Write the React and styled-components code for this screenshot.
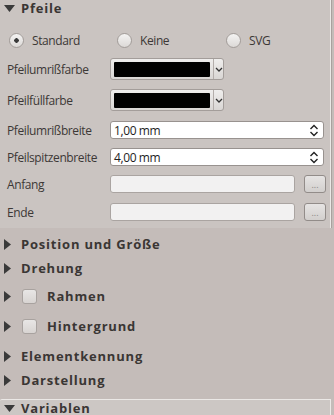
import React from "react";
import styled, { createGlobalStyle } from "styled-components";

const Global = createGlobalStyle`
  body {
    margin: 0;
    background: #c4bcb9;
    font-family: "Open Sans", "DejaVu Sans", sans-serif;
    font-size: 12px;
    letter-spacing: -0.4px;
    color: #3c3836;
  }
`;

function TriDown() {
  return (
    <TriSvg width="11" height="7" viewBox="0 0 11 7">
      <path d="M0 0 L11 0 L5.5 7 Z" fill="#3a3a3a" />
    </TriSvg>
  );
}

function TriRight() {
  return (
    <TriSvg width="7" height="11" viewBox="0 0 7 11">
      <path d="M0 0 L7 5.5 L0 11 Z" fill="#3a3a3a" />
    </TriSvg>
  );
}

function Chevron() {
  return (
    <svg width="8" height="5" viewBox="0 0 8 5">
      <path d="M1 1 L4 4 L7 1" stroke="#333" strokeWidth="1.3" fill="none" />
    </svg>
  );
}

function UpDown() {
  return (
    <svg width="10" height="13" viewBox="0 0 10 13">
      <path d="M1.5 5 L5 1.5 L8.5 5" stroke="#222" strokeWidth="1.4" fill="none" />
      <path d="M1.5 8 L5 11.5 L8.5 8" stroke="#222" strokeWidth="1.4" fill="none" />
    </svg>
  );
}

const fields = [
  { label: "Pfeilumrißfarbe", kind: "color", gap: 8, h: 22 },
  { label: "Pfeilfüllfarbe", kind: "color", gap: 9, h: 22 },
  { label: "Pfeilumrißbreite", kind: "spin", value: "1,00 mm", gap: 10, h: 18 },
  { label: "Pfeilspitzenbreite", kind: "spin", value: "4,00 mm", gap: 9, h: 18 },
  { label: "Anfang", kind: "file", gap: 9, h: 18 },
  { label: "Ende", kind: "file", gap: 10, h: 18 },
];

const sections = [
  { title: "Position und Größe", h: 24, gap: 4 },
  { title: "Drehung", h: 25 },
  { title: "Rahmen", h: 30, check: true },
  { title: "Hintergrund", h: 31, check: true },
  { title: "Elementkennung", h: 24, gap: 2 },
  { title: "Darstellung", h: 25 },
];

export default function App() {
  return (
    <>
      <Global />
      <Panel>
        <Group>
          <GroupHeader>
            <TriDown />
            <Title $left={6}>Pfeile</Title>
          </GroupHeader>
          <RadioRow>
            <RadioItem $w={108}>
              <Radio $on />
              Standard
            </RadioItem>
            <RadioItem $w={109}>
              <Radio />
              Keine
            </RadioItem>
            <RadioItem>
              <Radio />
              SVG
            </RadioItem>
          </RadioRow>
          {fields.map((f) => (
            <FieldRow key={f.label} $gap={f.gap} $h={f.h}>
              <Label>{f.label}</Label>
              {f.kind === "color" && (
                <ColorButton>
                  <Swatch />
                  <ArrowPart>
                    <Chevron />
                  </ArrowPart>
                </ColorButton>
              )}
              {f.kind === "spin" && (
                <SpinBox>
                  <span>{f.value}</span>
                  <UpDown />
                </SpinBox>
              )}
              {f.kind === "file" && (
                <FileWrap>
                  <FileInput />
                  <DotsButton>...</DotsButton>
                </FileWrap>
              )}
            </FieldRow>
          ))}
        </Group>
        {sections.map((s) => (
          <Section key={s.title} $h={s.h} $gap={s.gap || 0}>
            <TriRight />
            {s.check && <Check />}
            <Title $left={10}>{s.title}</Title>
          </Section>
        ))}
        <BottomHeader>
          <TriDown />
          <Title $left={6}>Variablen</Title>
        </BottomHeader>
      </Panel>
    </>
  );
}

const TriSvg = styled.svg`
  flex: none;
  display: block;
`;

const Panel = styled.div`
  width: 334px;
  height: 415px;
  overflow: hidden;
  display: flex;
  flex-direction: column;
  background: #c4bcb9;
`;

const Group = styled.div`
  width: 331px;
  height: 228px;
  flex: none;
  box-sizing: border-box;
  background: #cac4c1;
  border-right: 1px solid #ebe8e6;
  box-shadow: 1px 0 0 #a9a19e;
  display: flex;
  flex-direction: column;
`;

const GroupHeader = styled.div`
  height: 17px;
  display: flex;
  align-items: center;
  padding-left: 4px;
`;

const Title = styled.span`
  font-weight: bold;
  font-size: 13px;
  line-height: 15px;
  letter-spacing: 0.8px;
  color: #3a3634;
  white-space: nowrap;
  margin-left: ${(p) => p.$left}px;
`;

const RadioRow = styled.div`
  margin-top: 13px;
  height: 20px;
  display: flex;
  align-items: center;
  padding-left: 9px;
`;

const RadioItem = styled.label`
  width: ${(p) => (p.$w ? `${p.$w}px` : "auto")};
  display: flex;
  align-items: center;
  gap: 8px;
`;

const Radio = styled.span`
  width: 13px;
  height: 13px;
  flex: none;
  border-radius: 50%;
  border: 1px solid #a29c99;
  background: ${(p) =>
    p.$on
      ? "radial-gradient(circle at 50% 50%, #3a3a3a 0 2px, transparent 2.5px), linear-gradient(#f4f3f2, #dcd9d7)"
      : "linear-gradient(#f4f3f2, #dcd9d7)"};
`;

const FieldRow = styled.div`
  margin-top: ${(p) => p.$gap}px;
  height: ${(p) => p.$h}px;
  display: flex;
  align-items: center;
  padding-left: 7px;
`;

const Label = styled.span`
  width: 103px;
  flex: none;
  white-space: nowrap;
`;

const ColorButton = styled.div`
  width: 114px;
  height: 22px;
  box-sizing: border-box;
  border: 1px solid #a39d9a;
  border-radius: 3px;
  background: linear-gradient(#efeeed, #d9d6d4);
  display: flex;
  align-items: center;
  padding-left: 3px;
`;

const Swatch = styled.div`
  width: 96px;
  height: 15px;
  background: #000;
  border-radius: 1px;
`;

const ArrowPart = styled.div`
  margin-left: 3px;
  height: 100%;
  flex: 1;
  border-left: 1px solid #b3adaa;
  display: flex;
  align-items: center;
  justify-content: center;
`;

const SpinBox = styled.div`
  width: 214px;
  height: 18px;
  box-sizing: border-box;
  border: 1px solid #98928f;
  border-radius: 3px;
  background: #fff;
  display: flex;
  align-items: center;
  justify-content: space-between;
  padding: 0 4px 0 3px;
  color: #1e1e1e;
`;

const FileWrap = styled.div`
  display: flex;
  align-items: center;
  gap: 9px;
`;

const FileInput = styled.div`
  width: 185px;
  height: 18px;
  box-sizing: border-box;
  border: 1px solid #aaa4a1;
  border-radius: 3px;
  background: #f2f1f1;
`;

const DotsButton = styled.div`
  width: 22px;
  height: 18px;
  box-sizing: border-box;
  border: 1px solid #928c89;
  border-radius: 3px;
  background: linear-gradient(#e6e4e3, #d2cfcd);
  font-size: 9px;
  color: #8a8583;
  display: flex;
  align-items: center;
  justify-content: center;
  letter-spacing: 0;
  line-height: 1;
`;

const Section = styled.div`
  margin-top: ${(p) => p.$gap}px;
  height: ${(p) => p.$h}px;
  flex: none;
  display: flex;
  align-items: center;
  padding-left: 4px;
`;

const Check = styled.span`
  width: 15px;
  height: 15px;
  flex: none;
  box-sizing: border-box;
  margin-left: 11px;
  border: 1px solid #a8a29f;
  border-radius: 3px;
  background: linear-gradient(#e8e6e5, #d8d4d2);
`;

const BottomHeader = styled.div`
  margin-top: 6px;
  height: 17px;
  flex: none;
  width: 331px;
  box-sizing: border-box;
  display: flex;
  align-items: center;
  padding-left: 4px;
  background: #ccc7c4;
  border-top: 1px solid #ebe8e6;
  border-right: 1px solid #ebe8e6;
  border-top-left-radius: 2px;
`;
